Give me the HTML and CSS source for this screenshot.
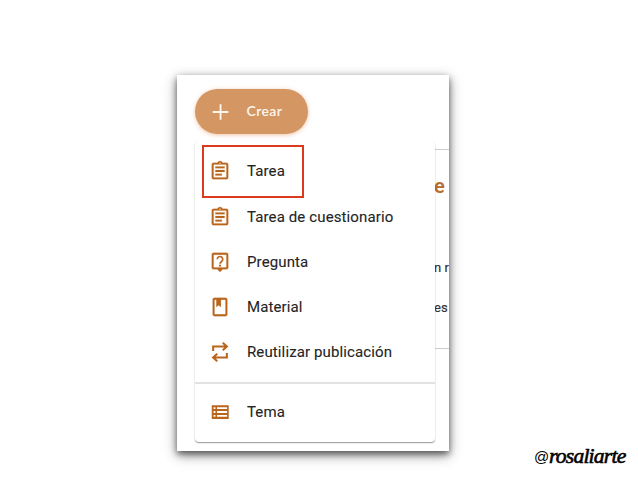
FILE: index.html
```html
<!DOCTYPE html>
<html lang="es">
<head>
    <meta charset="UTF-8">
    <meta name="viewport" content="width=device-width, initial-scale=1.0">
    <title>Crear</title>
    <link rel="stylesheet" href="styles.css">
</head>
<body>
    <main class="window">
        <button class="create">
            <svg class="icon" viewBox="0 0 24 24"><path d="M11.500 3.500v17M3 12h17" stroke="currentColor" stroke-width="2"/></svg>
            <span>Crear</span>
        </button>

        <!-- Page content behind the menu -->
        <section class="panel">
            <h2>e</h2>
            <p>n r</p>
            <p>es</p>
        </section>

        <!-- Create menu -->
        <ul class="menu">
            <li class="selected">
                <svg class="icon" viewBox="0 0 24 24"><path d="M7 15h7v2H7zm0-4h10v2H7zm0-4h10v2H7zm12-4h-4.180C14.400 1.840 13.300 1 12 1s-2.400.84-2.820 2H5c-1.100 0-2 .9-2 2v14c0 1.100.9 2 2 2h14c1.100 0 2-.9 2-2V5c0-1.100-.9-2-2-2zm-7-.25c.41 0 .75.34.75.75s-.34.75-.75.75-.75-.34-.75-.75.34-.75.75-.75zM19 19H5V5h14v14z"/></svg>
                <span>Tarea</span>
            </li>
            <li>
                <svg class="icon" viewBox="0 0 24 24"><path d="M7 15h7v2H7zm0-4h10v2H7zm0-4h10v2H7zm12-4h-4.180C14.400 1.840 13.300 1 12 1s-2.400.84-2.820 2H5c-1.100 0-2 .9-2 2v14c0 1.100.9 2 2 2h14c1.100 0 2-.9 2-2V5c0-1.100-.9-2-2-2zm-7-.25c.41 0 .75.34.75.75s-.34.75-.75.75-.75-.34-.75-.75.34-.75.75-.75zM19 19H5V5h14v14z"/></svg>
                <span>Tarea de cuestionario</span>
            </li>
            <li>
                <svg class="icon" viewBox="0 0 24 24"><path d="M19 2H5c-1.100 0-2 .9-2 2v14c0 1.100.9 2 2 2h4l3 3 3-3h4c1.100 0 2-.9 2-2V4c0-1.100-.9-2-2-2zm0 16H5V4h14v14z"/><path d="M9 9a3 3 0 1 1 4.800 2.400C12.700 12.200 12 12.700 12 14" fill="none" stroke="currentColor" stroke-width="1.800"/><path d="M11 15h2v2h-2z"/></svg>
                <span>Pregunta</span>
            </li>
            <li>
                <svg class="icon" viewBox="0 0 24 24"><path d="M18 2H6c-1.100 0-2 .9-2 2v16c0 1.100.9 2 2 2h12c1.100 0 2-.9 2-2V4c0-1.100-.9-2-2-2zm0 18H6V4h2v8l2.500-1.800L13 12V4h5v16z"/></svg>
                <span>Material</span>
            </li>
            <li>
                <svg class="icon" viewBox="0 0 24 24"><path d="M4.500 11V6H18M15 2l4.500 4L15 10M19.500 13v5H6M9 14l-4.500 4L9 22" fill="none" stroke="currentColor" stroke-width="2.200"/></svg>
                <span>Reutilizar publicación</span>
            </li>
            <li class="divider"></li>
            <li>
                <svg class="icon" viewBox="0 0 24 24"><path stroke="none" fill-rule="evenodd" d="M3 4.500h18.500v15H3zM5 6.800v2h2v-2zm3.700 0v2h11v-2zM5 11v2h2v-2zm3.700 0v2h11v-2zM5 15.200v2h2v-2zm3.700 0v2h11v-2z"/></svg>
                <span>Tema</span>
            </li>
        </ul>
    </main>
    <footer class="signature"><span class="at">@</span><span class="name">rosaliarte</span></footer>
</body>
</html>
```

FILE: styles.css
```css
* {
    box-sizing: border-box;
}
body {
    margin: 0;
    height: 479px;
    padding-top: 75px;
    background-color: #fff;
    font-family: Roboto, Arial, sans-serif;
    color: #242424;
    overflow: hidden;
}
.window {
    position: relative;
    width: 272px;
    height: 376px;
    margin-left: 177px;
    padding-top: 14px;
    background-color: #fff;
    box-shadow: 0 4px 12px rgba(0, 0, 0, 0.45), 0 3px 6px rgba(0, 0, 0, 0.45);
}
.create {
    display: flex;
    align-items: center;
    gap: 15px;
    width: 113px;
    height: 45px;
    margin-left: 18px;
    padding: 0 0 0 14.5px;
    border: none;
    border-radius: 23px;
    background-color: #d49663;
    box-shadow: 0 1px 4px rgba(226, 140, 80, 0.5);
    color: #fff7ee;
    font: 600 14px Lato, sans-serif;
    letter-spacing: 0.4px;
}
.create span {
    margin-top: -2px;
}
.icon {
    flex: none;
    width: 22px;
    height: 22px;
    fill: currentColor;
}
.panel {
    height: 200px;
    margin: 15px 0 0 257px;
    border: 1px solid #ccc;
    border-width: 1px 0;
    overflow: hidden;
    white-space: nowrap;
}
.panel h2 {
    margin: 23px 0 55px;
    font-size: 20px;
    font-weight: 500;
    line-height: 26px;
    color: #b96c28;
    -webkit-text-stroke: 0.2px;
}
.panel p {
    margin: 0 0 12px 0;
    font-size: 13px;
    line-height: 28px;
    color: #333;
    -webkit-text-stroke: 0.2px;
}
.menu {
    position: absolute;
    top: 66px;
    left: 18px;
    width: 240px;
    height: 301px;
    margin: 0;
    padding: 7px 0;
    list-style: none;
    background-color: #fff;
    border-radius: 4px;
    box-shadow: 0 1px 1px rgba(0, 0, 0, 0.3), 0 1px 2px rgba(0, 0, 0, 0.15);
}
.menu li {
    display: flex;
    align-items: center;
    gap: 16px;
    height: 45px;
    padding-left: 14px;
    font-size: 15px;
    letter-spacing: 0.12px;
    -webkit-text-stroke: 0.1px;
}
.menu .icon {
    color: #b9651c;
    stroke: currentColor;
    stroke-width: 0.2px;
}
.menu .selected {
    position: relative;
    margin-bottom: 1px;
}
/* Red frame around the selected option */
.menu .selected::before {
    content: "";
    position: absolute;
    top: -3px;
    left: 7px;
    box-sizing: border-box;
    width: 102px;
    height: 53px;
    border: 2px solid #dc3a1c;
}
.menu .divider {
    height: 2px;
    margin: 8px 0 5px;
    padding: 0;
    background-color: #e2e2e2;
}
.signature {
    display: flex;
    align-items: center;
    height: 28px;
    margin-left: 534px;
    margin-top: -9px;
    color: #000;
}
.signature .at {
    width: 15px;
    font: 15px "Liberation Sans", sans-serif;
}
.signature .name {
    font: italic 22px "Liberation Serif", cursive;
    letter-spacing: -0.8px;
    transform: scaleX(0.98);
    transform-origin: left;
    -webkit-text-stroke: 0.6px;
}
```
